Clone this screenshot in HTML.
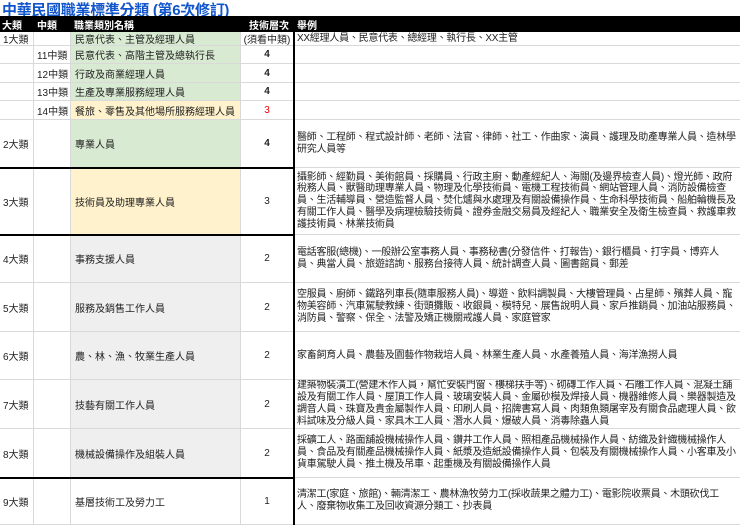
<!DOCTYPE html>
<html><head><meta charset="utf-8">
<style>
*{margin:0;padding:0;box-sizing:border-box}
body{width:740px;height:525px;overflow:hidden;background:#fff;font-family:"Liberation Sans","Noto Sans CJK TC",sans-serif;font-size:10px;color:#222;position:relative}
.title{position:absolute;left:2px;top:-1px;font-size:15px;font-weight:bold;color:#1155cc;text-decoration:underline;white-space:nowrap;letter-spacing:-0.3px}
.hdr{position:absolute;left:0;top:16px;width:740px;height:16px;background:#000;color:#fff;font-weight:bold;font-size:10px}
.hdr span{position:absolute;top:1px}
.c{position:absolute;display:flex;align-items:center;border-right:1px solid #d9d9d9;border-bottom:1px solid #d9d9d9;padding-left:3px;white-space:nowrap;overflow:hidden}
.ctr{justify-content:center;padding-left:0}
.ex{white-space:normal;line-height:11.8px;padding:0 2px 0 3px;font-size:10px;letter-spacing:-0.25px;border-right:none}
.g{background:#d9ead3}.y{background:#fff2cc}.gr{background:#efefef}
.hl{position:absolute;background:#000;height:2px}
.vl{position:absolute;background:#000;width:2px}
</style></head><body>
<div class="title">中華民國職業標準分類 (第6次修訂)</div>
<div class="hdr"><span style="left:2px">大類</span><span style="left:37px">中類</span><span style="left:74px">職業類別名稱</span><span style="left:249px">技術層次</span><span style="left:297px">舉例</span></div>

<div class="c" style="left:0;top:32px;width:34px;height:14px">1大類</div>
<div class="c" style="left:34px;top:32px;width:37px;height:14px"></div>
<div class="c g" style="left:71px;top:32px;width:170px;height:14px;padding-left:4px">民意代表、主管及經理人員</div>
<div class="c ctr" style="left:241px;top:32px;width:53px;height:14px">(須看中類)</div>
<div class="c ex" style="left:294px;top:32px;width:446px;height:14px">XX經理人員、民意代表、總經理、執行長、XX主管</div>

<div class="c" style="left:0;top:46px;width:34px;height:18px"></div>
<div class="c" style="left:34px;top:46px;width:37px;height:18px">11中類</div>
<div class="c g" style="left:71px;top:46px;width:170px;height:18px;padding-left:4px">民意代表、高階主管及總執行長</div>
<div class="c ctr" style="left:241px;top:46px;width:53px;height:18px;font-weight:bold">4</div>
<div class="c ex" style="left:294px;top:46px;width:446px;height:18px"></div>

<div class="c" style="left:0;top:64px;width:34px;height:19px"></div>
<div class="c" style="left:34px;top:64px;width:37px;height:19px">12中類</div>
<div class="c g" style="left:71px;top:64px;width:170px;height:19px;padding-left:4px">行政及商業經理人員</div>
<div class="c ctr" style="left:241px;top:64px;width:53px;height:19px;font-weight:bold">4</div>
<div class="c ex" style="left:294px;top:64px;width:446px;height:19px"></div>

<div class="c" style="left:0;top:83px;width:34px;height:18px"></div>
<div class="c" style="left:34px;top:83px;width:37px;height:18px">13中類</div>
<div class="c g" style="left:71px;top:83px;width:170px;height:18px;padding-left:4px">生產及專業服務經理人員</div>
<div class="c ctr" style="left:241px;top:83px;width:53px;height:18px;font-weight:bold">4</div>
<div class="c ex" style="left:294px;top:83px;width:446px;height:18px"></div>

<div class="c" style="left:0;top:101px;width:34px;height:19px"></div>
<div class="c" style="left:34px;top:101px;width:37px;height:19px">14中類</div>
<div class="c y" style="left:71px;top:101px;width:170px;height:19px;padding-left:4px">餐旅、零售及其他場所服務經理人員</div>
<div class="c ctr" style="left:241px;top:101px;width:53px;height:19px;color:#e00">3</div>
<div class="c ex" style="left:294px;top:101px;width:446px;height:19px"></div>

<div class="c" style="left:0;top:120px;width:34px;height:48px">2大類</div>
<div class="c" style="left:34px;top:120px;width:37px;height:48px"></div>
<div class="c g" style="left:71px;top:120px;width:170px;height:48px;padding-left:4px">專業人員</div>
<div class="c ctr" style="left:241px;top:120px;width:53px;height:48px;font-weight:bold">4</div>
<div class="c ex" style="left:294px;top:120px;width:446px;height:48px">醫師、工程師、程式設計師、老師、法官、律師、社工、作曲家、演員、護理及助產專業人員、造林學研究人員等</div>

<div class="c" style="left:0;top:168px;width:34px;height:67px">3大類</div>
<div class="c" style="left:34px;top:168px;width:37px;height:67px"></div>
<div class="c y" style="left:71px;top:168px;width:170px;height:67px;padding-left:4px">技術員及助理專業人員</div>
<div class="c ctr" style="left:241px;top:168px;width:53px;height:67px">3</div>
<div class="c ex" style="left:294px;top:168px;width:446px;height:67px">攝影師、經勤員、美術館員、採購員、行政主廚、動產經紀人、海關(及邊界檢查人員)、燈光師、政府稅務人員、獸醫助理專業人員、物理及化學技術員、電機工程技術員、網站管理人員、消防設備檢查員、生活輔導員、營造監督人員、焚化爐與水處理及有關設備操作員、生命科學技術員、船舶輪機長及有關工作人員、醫學及病理檢驗技術員、證券金融交易員及經紀人、職業安全及衛生檢查員、救護車救護技術員、林業技術員</div>

<div class="c" style="left:0;top:235px;width:34px;height:48px">4大類</div>
<div class="c" style="left:34px;top:235px;width:37px;height:48px"></div>
<div class="c gr" style="left:71px;top:235px;width:170px;height:48px;padding-left:4px">事務支援人員</div>
<div class="c ctr" style="left:241px;top:235px;width:53px;height:48px">2</div>
<div class="c ex" style="left:294px;top:235px;width:446px;height:48px">電話客服(總機)、一般辦公室事務人員、事務秘書(分發信件、打報告)、銀行櫃員、打字員、博弈人員、典當人員、旅遊諮詢、服務台接待人員、統計調查人員、圖書館員、郵差</div>

<div class="c" style="left:0;top:283px;width:34px;height:49px">5大類</div>
<div class="c" style="left:34px;top:283px;width:37px;height:49px"></div>
<div class="c gr" style="left:71px;top:283px;width:170px;height:49px;padding-left:4px">服務及銷售工作人員</div>
<div class="c ctr" style="left:241px;top:283px;width:53px;height:49px">2</div>
<div class="c ex" style="left:294px;top:283px;width:446px;height:49px">空服員、廚師、鐵路列車長(隨車服務人員)、導遊、飲料調製員、大樓管理員、占星師、殯葬人員、寵物美容師、汽車駕駛教練、街頭攤販、收銀員、模特兒、展售說明人員、家戶推銷員、加油站服務員、消防員、警察、保全、法警及矯正機關戒護人員、家庭管家</div>

<div class="c" style="left:0;top:332px;width:34px;height:48px">6大類</div>
<div class="c" style="left:34px;top:332px;width:37px;height:48px"></div>
<div class="c gr" style="left:71px;top:332px;width:170px;height:48px;padding-left:4px">農、林、漁、牧業生產人員</div>
<div class="c ctr" style="left:241px;top:332px;width:53px;height:48px">2</div>
<div class="c ex" style="left:294px;top:332px;width:446px;height:48px">家畜飼育人員、農藝及園藝作物栽培人員、林業生產人員、水產養殖人員、海洋漁撈人員</div>

<div class="c" style="left:0;top:380px;width:34px;height:49px">7大類</div>
<div class="c" style="left:34px;top:380px;width:37px;height:49px"></div>
<div class="c gr" style="left:71px;top:380px;width:170px;height:49px;padding-left:4px">技藝有關工作人員</div>
<div class="c ctr" style="left:241px;top:380px;width:53px;height:49px">2</div>
<div class="c ex" style="left:294px;top:380px;width:446px;height:49px">建築物裝潢工(營建木作人員，幫忙安裝門窗、樓梯扶手等)、砌磚工作人員、石雕工作人員、混凝土舖設及有關工作人員、屋頂工作人員、玻璃安裝人員、金屬砂模及焊接人員、機器維修人員、樂器製造及調音人員、珠寶及貴金屬製作人員、印刷人員、招牌書寫人員、肉類魚類屠宰及有關食品處理人員、飲料試味及分級人員、家具木工人員、潛水人員、爆破人員、消毒除蟲人員</div>

<div class="c" style="left:0;top:429px;width:34px;height:49px">8大類</div>
<div class="c" style="left:34px;top:429px;width:37px;height:49px"></div>
<div class="c gr" style="left:71px;top:429px;width:170px;height:49px;padding-left:4px">機械設備操作及組裝人員</div>
<div class="c ctr" style="left:241px;top:429px;width:53px;height:49px">2</div>
<div class="c ex" style="left:294px;top:429px;width:446px;height:49px">採礦工人、路面舖設機械操作人員、鑽井工作人員、照相產品機械操作人員、紡織及針織機械操作人員、食品及有關產品機械操作人員、紙漿及造紙設備操作人員、包裝及有關機械操作人員、小客車及小貨車駕駛人員、推土機及吊車、起重機及有關設備操作人員</div>

<div class="c" style="left:0;top:478px;width:34px;height:47px">9大類</div>
<div class="c" style="left:34px;top:478px;width:37px;height:47px"></div>
<div class="c" style="left:71px;top:478px;width:170px;height:47px;padding-left:4px">基層技術工及勞力工</div>
<div class="c ctr" style="left:241px;top:478px;width:53px;height:47px">1</div>
<div class="c ex" style="left:294px;top:478px;width:446px;height:47px">清潔工(家庭、旅館)、輛清潔工、農林漁牧勞力工(採收蔬果之體力工)、電影院收票員、木頭砍伐工人、廢棄物收集工及回收資源分類工、抄表員</div>

<div class="hl" style="left:0;top:167px;width:294px"></div>
<div class="hl" style="left:0;top:234px;width:294px"></div>
<div class="hl" style="left:0;top:477px;width:294px"></div>
<div class="vl" style="left:293px;top:32px;height:493px"></div>
</body></html>
